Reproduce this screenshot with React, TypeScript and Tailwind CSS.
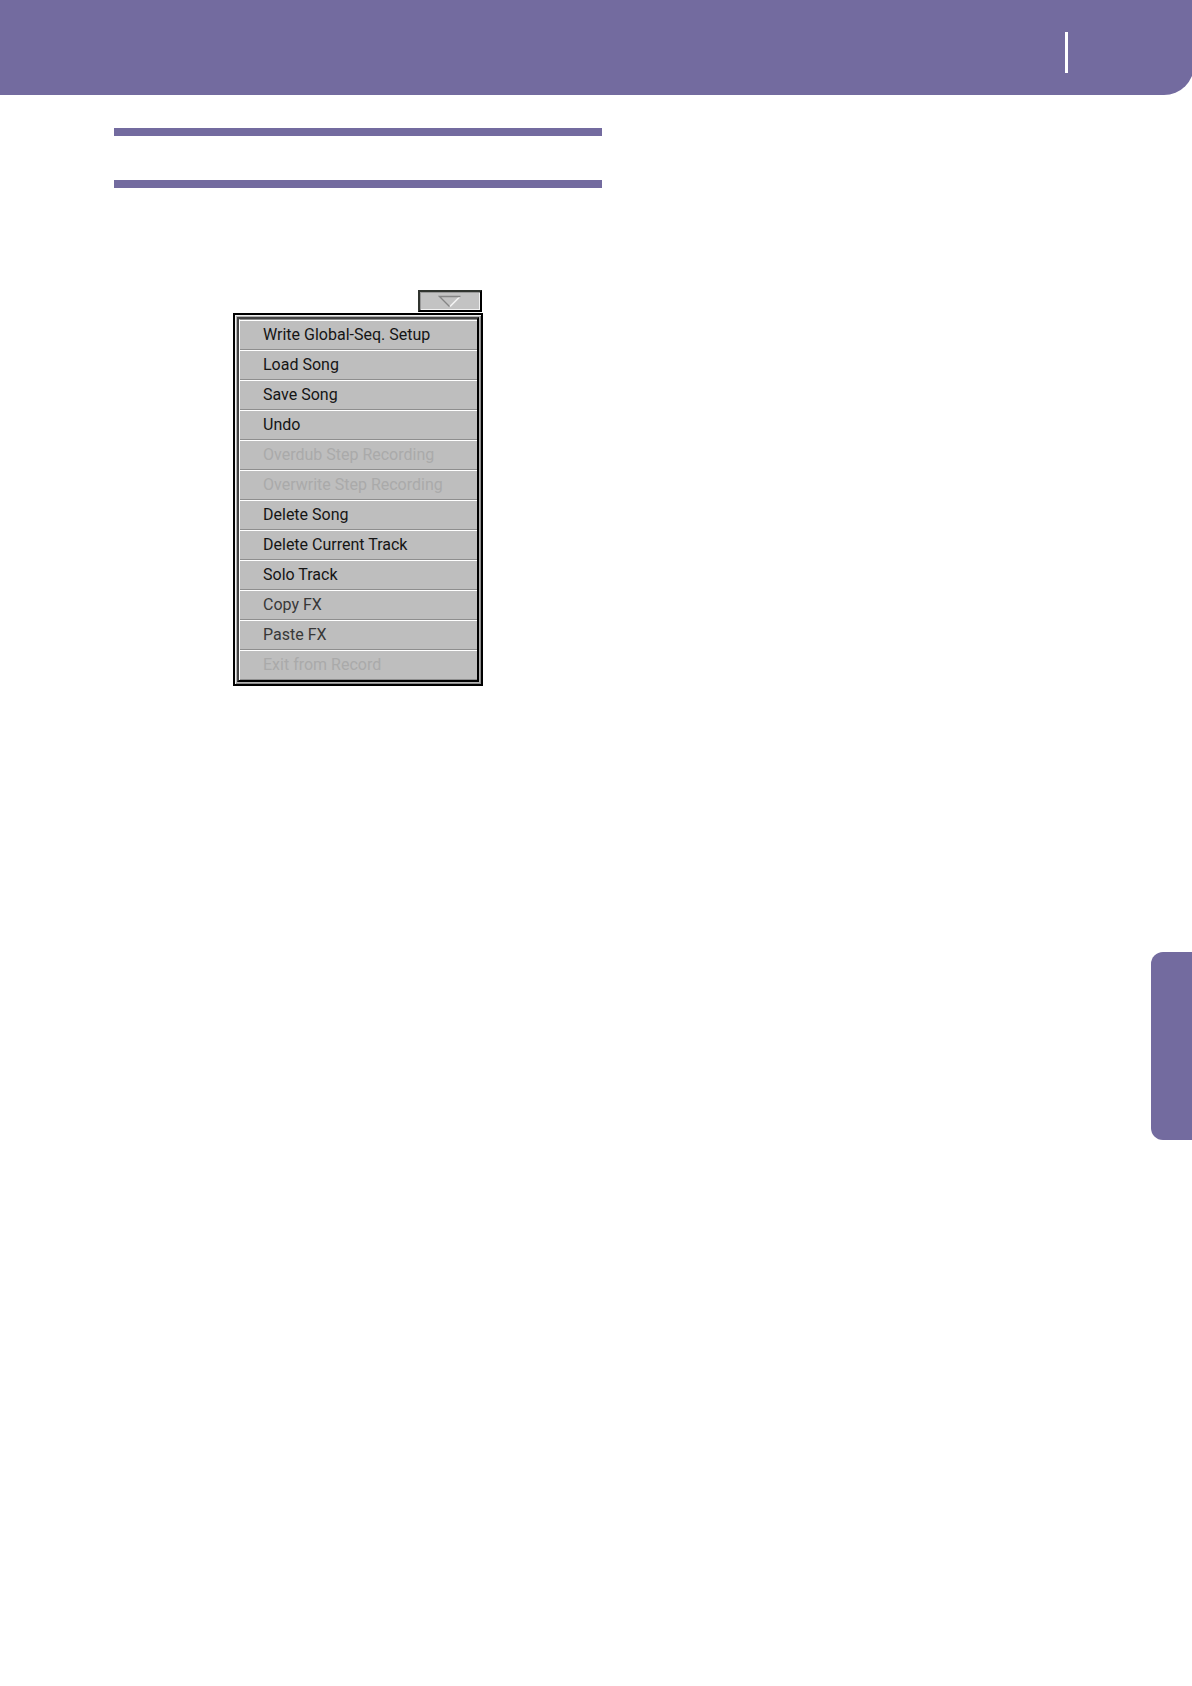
interface MenuEntry {
  label: string;
  tone?: "normal" | "soft" | "off";
}

const entries: MenuEntry[] = [
  { label: "Write Global-Seq. Setup" },
  { label: "Load Song" },
  { label: "Save Song" },
  { label: "Undo" },
  { label: "Overdub Step Recording", tone: "off" },
  { label: "Overwrite Step Recording", tone: "off" },
  { label: "Delete Song" },
  { label: "Delete Current Track" },
  { label: "Solo Track" },
  { label: "Copy FX", tone: "soft" },
  { label: "Paste FX", tone: "soft" },
  { label: "Exit from Record", tone: "off" },
];

const tones = {
  normal: "text-[#151515]",
  soft: "text-[#383838]",
  off: "text-[#aaaaaa]",
};

function PageHeader() {
  return (
    <div className="overflow-hidden">
      <header className="-mr-0.5 flex h-[95px] justify-end rounded-br-[30px] bg-[#736b9f] pt-8 pr-[126px]">
        <div className="h-[41px] w-[3px] bg-white" />
      </header>
    </div>
  );
}

function MenuToggle() {
  return (
    <button
      type="button"
      aria-label="Open page menu"
      className="mr-px flex h-[22px] w-16 items-center justify-center border-2 border-t-[#30342f] border-r-black border-b-black border-l-[#30342f] bg-[#c3c3c3] shadow-[inset_1px_1px_0_#989898,inset_-1px_-1px_0_#f2f2f2]"
    >
      <svg width="24" height="13" viewBox="0 0 24 13" fill="none" aria-hidden="true">
        <path d="M22 1.5 12 11.5" stroke="#f4f4f4" strokeWidth="1.6" />
        <path d="M22.500 1.500H1.500L11.500 11.500" stroke="#858585" strokeWidth="1.3" />
      </svg>
    </button>
  );
}

function MenuItem({ label, tone = "normal" }: MenuEntry) {
  return (
    <li>
      <button
        type="button"
        disabled={tone === "off"}
        className={`flex h-[30px] w-full items-center border-t border-b border-t-white border-b-[#8e8e8e] bg-[#bebebe] pl-[23px] text-left text-base leading-5 ${tones[tone]}`}
      >
        {label}
      </button>
    </li>
  );
}

function PageMenu() {
  return (
    <nav className="flex w-[250px] flex-col items-end gap-px" aria-label="Page menu">
      <MenuToggle />
      {/* outer frame, light bevel, then the inner dark frame */}
      <div className="w-full border-2 border-black bg-[#b4b4b4] p-0.5 shadow-[inset_1px_1px_0_#f0f0f0,inset_-1px_-1px_0_#8a8a8a]">
        <div className="border-2 border-t-[#444] border-r-black border-b-black border-l-[#444]">
          <ul className="border-t border-l border-t-[#8e8e8e] border-l-white">
            {entries.map((entry) => (
              <MenuItem key={entry.label} {...entry} />
            ))}
          </ul>
        </div>
      </div>
    </nav>
  );
}

export default function App() {
  return (
    <div className="min-h-screen bg-white font-['Roboto',sans-serif]">
      <PageHeader />
      <div className="flex">
        <main className="grid flex-1 grid-cols-2 gap-6 pt-[33px] pr-[37px] pl-[114px]">
          <section className="flex flex-col items-center">
            <div className="h-[60px] w-full border-y-8 border-[#736b9f]" />
            <div className="pt-[102px]">
              <PageMenu />
            </div>
          </section>
        </main>
        <aside className="mt-[857px] h-[188px] w-[41px] rounded-l-xl bg-[#736b9f]" />
      </div>
    </div>
  );
}
